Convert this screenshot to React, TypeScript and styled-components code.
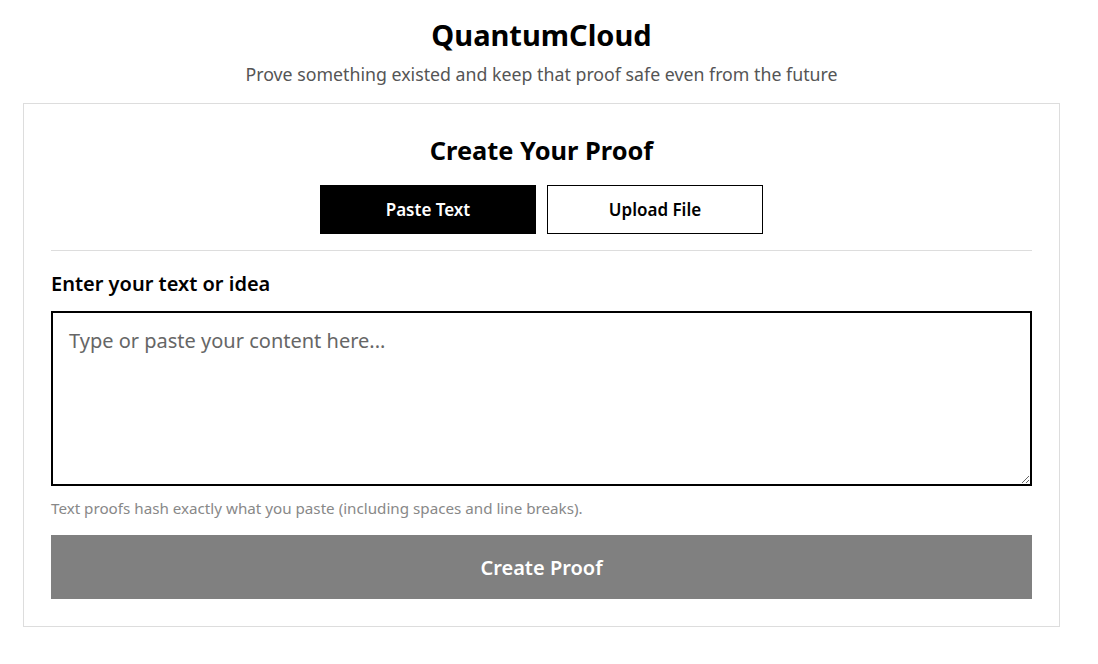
import React, { useState } from 'react'
import styled, { createGlobalStyle, css } from 'styled-components'

const GlobalStyle = createGlobalStyle`
  * { box-sizing: border-box; }
  body {
    margin: 0;
    background: #fff;
    color: #000;
    font-family: 'Noto Sans', 'Open Sans', Arial, sans-serif;
  }
`

const Page = styled.div`
  width: 1083px;
  padding: 14px 23px 0 23px;
`

const Header = styled.header`
  text-align: center;
  margin-bottom: 17px;
`

const Title = styled.h1`
  margin: 0;
  font-size: 29px;
  font-weight: 700;
  line-height: 42px;
`

const Subtitle = styled.p`
  margin: 6px 0 0;
  font-size: 17.75px;
  color: #555;
  line-height: 24px;
`

const Card = styled.section`
  border: 1px solid #ddd;
  padding: 28px 27px 27px 27px;
`

const CardTitle = styled.h2`
  margin: 0 0 17px;
  text-align: center;
  font-size: 25.4px;
  font-weight: 700;
  line-height: 36px;
`

const Tabs = styled.div`
  display: flex;
  justify-content: center;
  gap: 11px;
  padding-bottom: 16px;
  border-bottom: 1px solid #ddd;
`

const Tab = styled.button<{ active?: boolean }>`
  width: 216px;
  height: 49px;
  font-family: inherit;
  font-size: 17px;
  font-weight: 600;
  border: 1px solid #000;
  background: #fff;
  color: #000;
  cursor: pointer;
  ${p =>
    p.active &&
    css`
      background: #000;
      color: #fff;
    `};
`

const Label = styled.label`
  display: block;
  margin: 20px 0 14px;
  font-size: 20px;
  font-weight: 600;
  line-height: 26px;
`

const TextArea = styled.textarea`
  display: block;
  width: 100%;
  height: 175px;
  border: 2px solid #000;
  padding: 14px 16px;
  font-family: inherit;
  font-size: 20px;
  color: #000;
  resize: vertical;
  outline: none;
  &::placeholder {
    color: #666;
  }
`

const Hint = styled.p`
  margin: 12px 0 17px;
  font-size: 15.2px;
  color: #888;
  line-height: 20px;
`

const Submit = styled.button`
  display: block;
  width: 100%;
  height: 64px;
  border: none;
  background: #808080;
  color: #fff;
  font-family: inherit;
  font-size: 20px;
  font-weight: 600;
`

const App = () => {
  const [mode, setMode] = useState<'text' | 'file'>('text')
  return (
    <Page>
      <GlobalStyle />
      <Header>
        <Title>QuantumCloud</Title>
        <Subtitle>Prove something existed and keep that proof safe even from the future</Subtitle>
      </Header>
      <Card>
        <CardTitle>Create Your Proof</CardTitle>
        <Tabs>
          <Tab active={mode === 'text'} onClick={() => setMode('text')}>
            Paste Text
          </Tab>
          <Tab active={mode === 'file'} onClick={() => setMode('file')}>
            Upload File
          </Tab>
        </Tabs>
        <Label htmlFor="proof-text">Enter your text or idea</Label>
        <TextArea id="proof-text" placeholder="Type or paste your content here..." />
        <Hint>Text proofs hash exactly what you paste (including spaces and line breaks).</Hint>
        <Submit disabled>Create Proof</Submit>
      </Card>
    </Page>
  )
}

export default App
